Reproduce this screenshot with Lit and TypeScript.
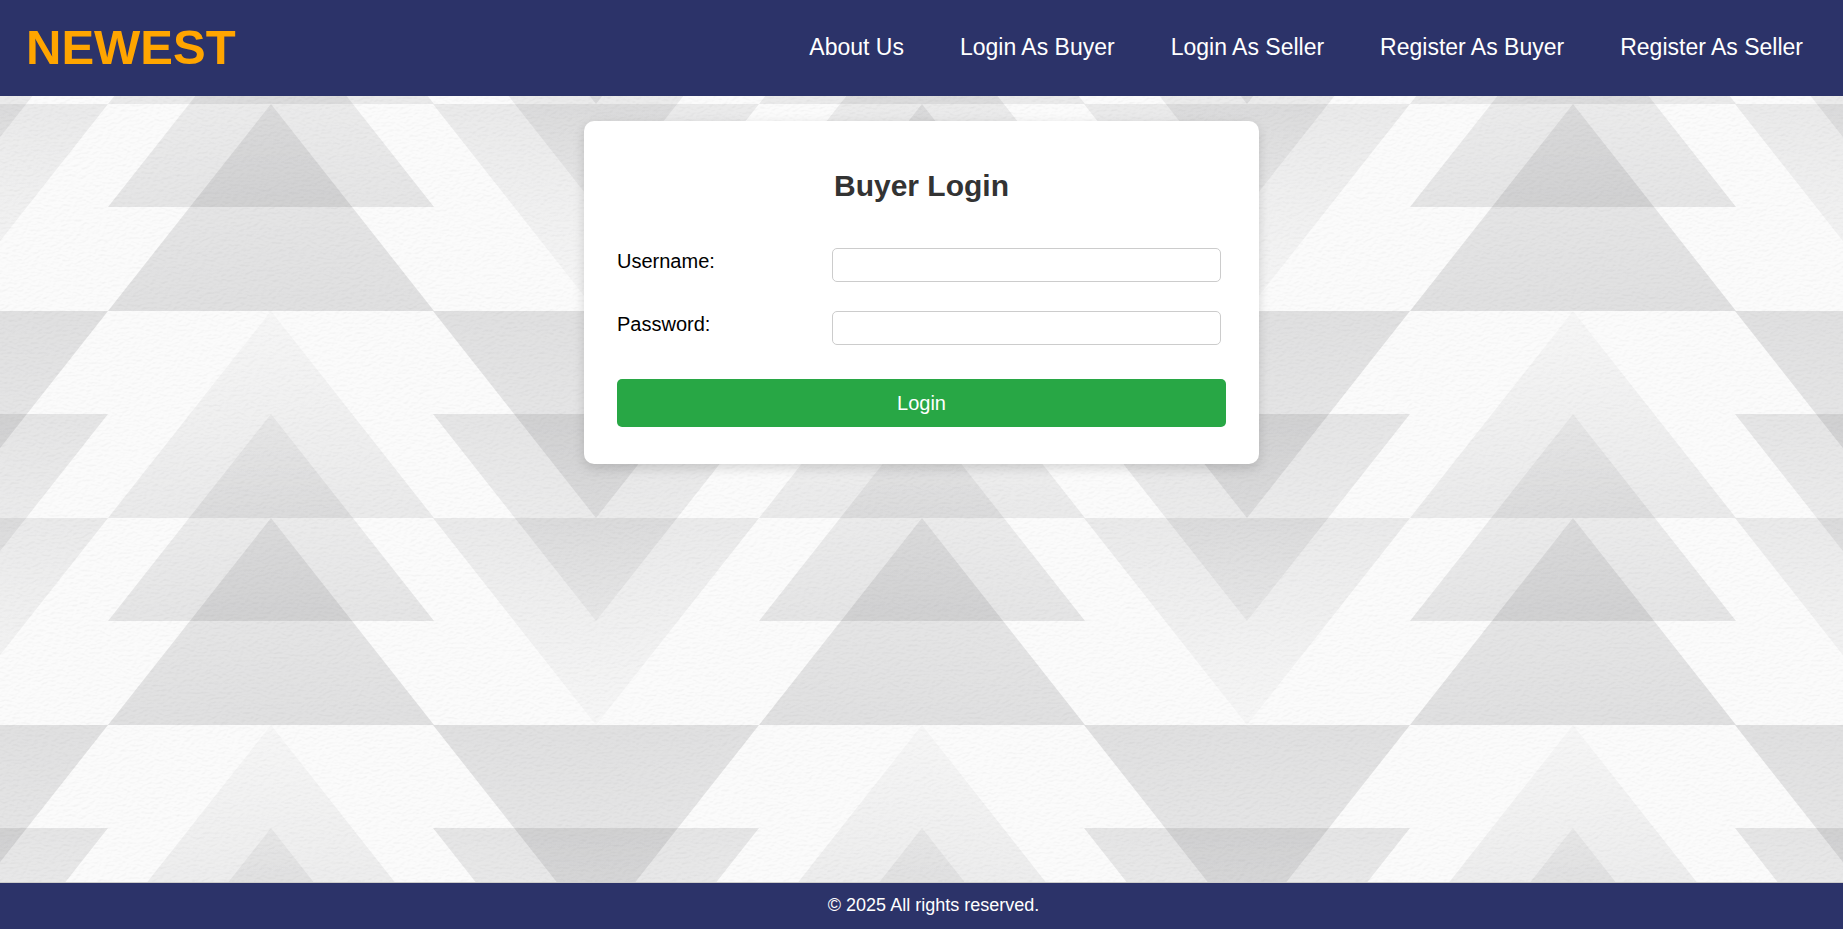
import { LitElement, html, css, svg } from "lit";
import { customElement } from "lit/decorators.js";

// One repeat of the backdrop is 651 x 414 units; each triangle is 326 x 207.
const UP_TRIANGLES: [number, string][] = [
  [-207, "fade"],
  [-104, "mid"],
  [0, "full"],
  [207, "fade"],
  [310, "mid"],
];
const DOWN_TRIANGLES: [number, string][] = [
  [-207, "full"],
  [-104, "mid"],
  [0, "fade"],
  [207, "full"],
  [310, "mid"],
];

const up = (cx: number, apex: number, fill: string) =>
  svg`<polygon points="${cx},${apex} ${cx + 163},${apex + 207} ${cx - 163},${apex + 207}" fill="url(#up-${fill})"/>`;
const down = (cx: number, base: number, fill: string) =>
  svg`<polygon points="${cx - 163},${base} ${cx + 163},${base} ${cx},${base + 207}" fill="url(#down-${fill})"/>`;

@customElement("paper-backdrop")
class PaperBackdrop extends LitElement {
  static styles = css`
    :host {
      display: block;
    }
    .art {
      display: block;
      width: 100%;
      height: 100%;
    }
  `;

  private gradient(id: string, top: number, bottom: number) {
    return svg`<linearGradient id=${id} x1="0" y1="0" x2="0" y2="1">
      <stop offset="0" stop-color="#000008" stop-opacity=${top}/>
      <stop offset="1" stop-color="#000008" stop-opacity=${bottom}/>
    </linearGradient>`;
  }

  render() {
    return html`
      <svg class="art" aria-hidden="true">
        <defs>
          ${this.gradient("up-fade", 0.02, 0.07)}
          ${this.gradient("up-mid", 0.04, 0.09)}
          ${this.gradient("up-full", 0.07, 0.11)}
          ${this.gradient("down-full", 0.11, 0.07)}
          ${this.gradient("down-mid", 0.09, 0.04)}
          ${this.gradient("down-fade", 0.07, 0.02)}
          <pattern id="triangles" width="651" height="414" patternUnits="userSpaceOnUse" patternTransform="translate(-55 8)">
            <rect width="651" height="414" fill="#fbfbfb" />
            ${UP_TRIANGLES.map(([y, f]) => up(326, y, f))}
            ${DOWN_TRIANGLES.map(([y, f]) => [down(0, y, f), down(651, y, f)])}
          </pattern>
          <filter id="paper" x="0" y="0" width="100%" height="100%" color-interpolation-filters="sRGB">
            <feTurbulence type="fractalNoise" baseFrequency="0.22 0.4" numOctaves="3" seed="4" result="noise" />
            <feDiffuseLighting in="noise" surfaceScale="0.1" diffuseConstant="1.15" lighting-color="#ffffff" result="relief">
              <feDistantLight azimuth="250" elevation="60" />
            </feDiffuseLighting>
            <feBlend in="SourceGraphic" in2="relief" mode="multiply" />
          </filter>
        </defs>
        <rect width="100%" height="100%" fill="url(#triangles)" filter="url(#paper)" />
      </svg>
    `;
  }
}

@customElement("app-root")
class AppRoot extends LitElement {
  static styles = css`
    :host {
      display: flex;
      flex-direction: column;
      min-height: 100vh;
      font-family: "Liberation Sans", Arial, sans-serif;
      font-size: 20px;
      color: #000;
    }
    .header {
      display: flex;
      align-items: center;
      justify-content: space-between;
      min-height: 96px;
      padding: 0 40px 2px 26px;
      box-sizing: border-box;
      background: #2c3369;
    }
    .logo {
      font-size: 49px;
      font-weight: bold;
      line-height: 56px;
      color: #ffa500;
      text-decoration: none;
    }
    .nav {
      display: flex;
      flex-wrap: wrap;
      gap: 8px 56px;
    }
    .link {
      font-size: 23px;
      line-height: 28px;
      color: #fff;
      text-decoration: none;
    }
    .main {
      position: relative;
      flex: 1;
      padding: 25px 16px;
    }
    .backdrop {
      position: absolute;
      inset: 0;
    }
    .card {
      position: relative;
      max-width: 675px;
      margin: 0 auto;
      padding: 47px 33px 37px;
      box-sizing: border-box;
      background: #fff;
      border-radius: 10px;
      box-shadow: 0 4px 12px rgba(0, 0, 0, 0.15);
    }
    .title {
      margin: 0 0 44px;
      font-size: 30px;
      line-height: 36px;
      text-align: center;
      color: #333;
    }
    .fields {
      display: grid;
      grid-template-columns: 215px 1fr;
      row-gap: 29px;
      padding-right: 5px;
      margin-bottom: 34px;
    }
    .label {
      line-height: 26px;
    }
    .input {
      width: 100%;
      height: 34px;
      padding: 8px;
      box-sizing: border-box;
      border: 1px solid #ccc;
      border-radius: 5px;
      background: #fff;
      font: inherit;
      font-size: 16px;
    }
    .submit {
      display: block;
      width: 100%;
      height: 48px;
      padding: 0;
      border: 0;
      border-radius: 5px;
      background: #28a745;
      color: #fff;
      font: inherit;
      cursor: pointer;
    }
    .footer {
      padding: 11px 12px 13px 36px;
      border-top: 1px solid #ccc;
      background: #2c3369;
      color: #fff;
      font-size: 18px;
      line-height: 22px;
      text-align: center;
    }
  `;

  private links = ["About Us", "Login As Buyer", "Login As Seller", "Register As Buyer", "Register As Seller"];

  render() {
    return html`
      <header class="header">
        <a class="logo" href="#">NEWEST</a>
        <nav class="nav">${this.links.map((text) => html`<a class="link" href="#">${text}</a>`)}</nav>
      </header>
      <main class="main">
        <paper-backdrop class="backdrop"></paper-backdrop>
        <form class="card">
          <h2 class="title">Buyer Login</h2>
          <div class="fields">
            <label class="label" for="username">Username:</label>
            <input class="input" id="username" type="text" autocomplete="username" />
            <label class="label" for="password">Password:</label>
            <input class="input" id="password" type="password" autocomplete="current-password" />
          </div>
          <button class="submit" type="button">Login</button>
        </form>
      </main>
      <footer class="footer">© 2025 All rights reserved.</footer>
    `;
  }
}
